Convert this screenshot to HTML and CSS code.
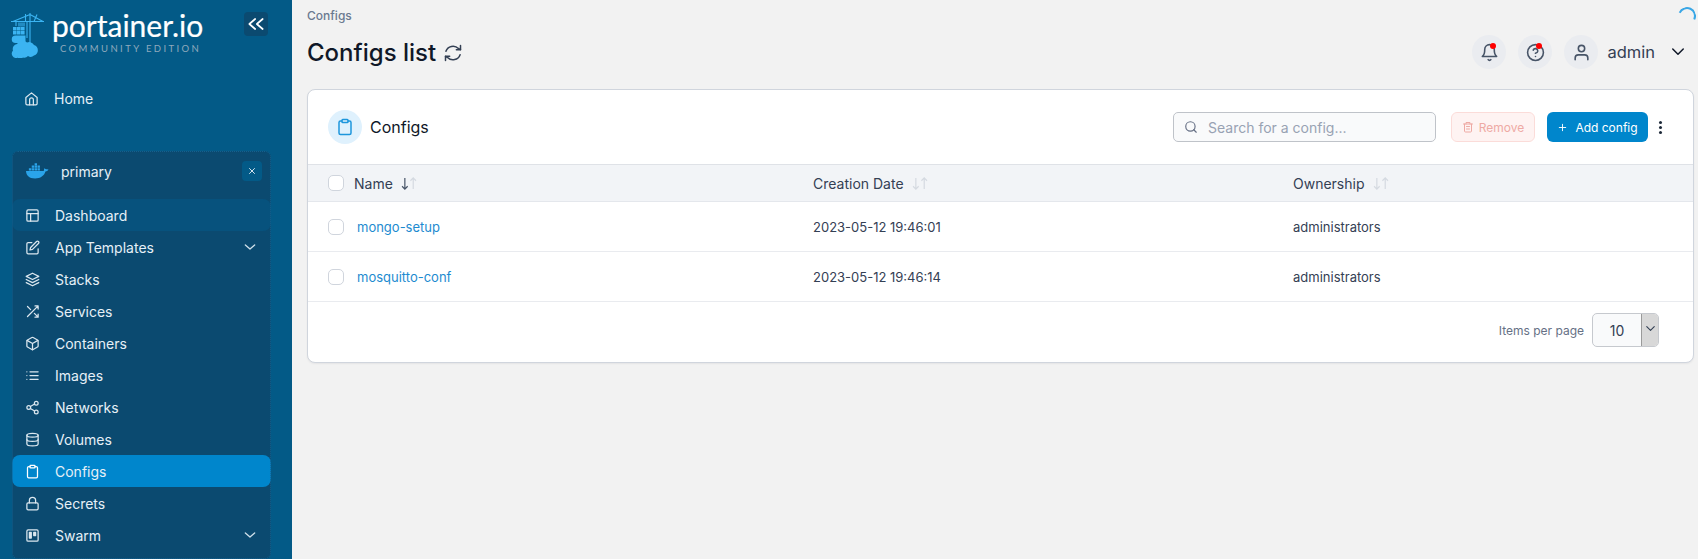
FILE: index.html
```html
<!DOCTYPE html>
<html lang="en">
<head>
<meta charset="utf-8">
<title>Configs list</title>
<link rel="stylesheet" href="styles.css">
</head>
<body>
<div class="app">
  <aside class="sidebar">
    <div class="brand">
      <svg class="logo" viewBox="0 0 34 46" fill="none">
        <path d="M0 9.500H33M19 1V38M19 2.500L2 9.500M19 2.500L32 9.500M16 9.500V26M14.500 2V9.500M23 9.500l3-7M5 9.500V14" stroke="#3bb4f2" stroke-width="1.100"/>
        <path d="M2 15h3.600v3.600H2zM6 15h3.600v3.600H6zM10 15h3.600v3.600H10zM2 19h3.600v3.600H2zM6 19h3.600v3.600H6zM10 19h3.600v3.600H10z" fill="#3bb4f2"/>
        <path d="M7 10.500h7v4H7z" fill="#3bb4f2" opacity=".55"/>
        <path d="M4.500 23.500H14.500V31H4.500a3.700 3.700 0 0 1 0-7.500z" fill="#3bb4f2"/>
        <path d="M6 46a4.500 4.500 0 0 1-4-7.500 5 5 0 0 1 4-6.500 6.500 6.500 0 0 1 10-1.500 5.500 5.500 0 0 1 7 2.500 5.500 5.500 0 0 1 0 10.500 5 5 0 0 1-6 0.500 5 5 0 0 1-5 1.500 5 5 0 0 1-6 0z" fill="#3bb4f2"/>
      </svg>
      <div class="wordmark">
        <div class="wordmark-name">portainer.io</div>
        <div class="wordmark-edition">COMMUNITY EDITION</div>
      </div>
      <button class="collapse" type="button" aria-label="Collapse">
        <svg viewBox="0 0 24 24" fill="none" stroke="currentColor" stroke-width="2" stroke-linecap="round" stroke-linejoin="round"><path d="M11 18l-7-6 7-6M20 18l-7-6 7-6"/></svg>
      </button>
    </div>
    <a class="home">
      <svg class="ico" viewBox="0 0 24 24"><path d="M3 10.500L12 3l9 7.500V20a2 2 0 0 1-2 2H5a2 2 0 0 1-2-2z"/><path d="M9 22v-8a3 3 0 0 1 6 0v8"/></svg>
      <span>Home</span>
    </a>
    <section class="env">
      <div class="env-head">
        <svg class="docker" viewBox="0 0 24 16" fill="#2aa4ea"><path d="M0 8h18.500c.6-1.800.2-3 .2-3l1 .7c.9.600 2.300.4 2.300.4l1.500.4c-.7 1.300-2 1.900-3.200 2C19 13 15 15.800 9.500 15.800 3 15.800.2 12.500 0 8z"/><path d="M3 5h2.500v2.500H3zM6 5h2.500v2.500H6zM9 5h2.500v2.500H9zM12 5h2.500v2.500H12zM6 2.300h2.500v2.300H6zM9 2.300h2.500v2.300H9zM12 2.300h2.500v2.300H12zM9-.2h2.500v2.200H9z"/></svg>
        <span class="env-name">primary</span>
        <button class="env-close" type="button" aria-label="Clear">
          <svg viewBox="0 0 24 24" fill="none" stroke="currentColor" stroke-width="2.200" stroke-linecap="round"><path d="M18 6L6 18M6 6l12 12"/></svg>
        </button>
      </div>
      <nav class="nav">
        <a class="nav-item is-hover"><svg class="ico" viewBox="0 0 24 24"><rect x="3" y="3" width="18" height="18" rx="2"/><path d="M3 9h18M9 21V9"/></svg><span>Dashboard</span></a>
        <a class="nav-item"><svg class="ico" viewBox="0 0 24 24"><path d="M11 4H5a2 2 0 0 0-2 2v14a2 2 0 0 0 2 2h14a2 2 0 0 0 2-2v-6"/><path d="M18.500 2.500a2.100 2.100 0 0 1 3 3L12 15l-4 1 1-4z"/></svg><span>App Templates</span><svg class="chev" viewBox="0 0 24 24"><path d="M5 9l7 6 7-6"/></svg></a>
        <a class="nav-item"><svg class="ico" viewBox="0 0 24 24"><path d="M12 2L2 7l10 5 10-5z"/><path d="M2 12l10 5 10-5M2 17l10 5 10-5"/></svg><span>Stacks</span></a>
        <a class="nav-item"><svg class="ico" viewBox="0 0 24 24"><path d="M16 3h5v5M4 20L21 3M21 16v5h-5M15 15l6 6M4 4l5 5"/></svg><span>Services</span></a>
        <a class="nav-item"><svg class="ico" viewBox="0 0 24 24"><path d="M21 16V8a2 2 0 0 0-1-1.700l-7-4a2 2 0 0 0-2 0l-7 4A2 2 0 0 0 3 8v8a2 2 0 0 0 1 1.700l7 4a2 2 0 0 0 2 0l7-4a2 2 0 0 0 1-1.700z"/><path d="M3.300 7L12 12l8.700-5M12 22V12"/></svg><span>Containers</span></a>
        <a class="nav-item"><svg class="ico" viewBox="0 0 24 24"><path d="M8 6h13M8 12h13M8 18h13M3 6h.01M3 12h.01M3 18h.01"/></svg><span>Images</span></a>
        <a class="nav-item"><svg class="ico" viewBox="0 0 24 24"><circle cx="18" cy="5" r="3"/><circle cx="6" cy="12" r="3"/><circle cx="18" cy="19" r="3"/><path d="M8.600 13.500l6.800 4M15.400 6.500l-6.800 4"/></svg><span>Networks</span></a>
        <a class="nav-item"><svg class="ico" viewBox="0 0 24 24"><ellipse cx="12" cy="5" rx="9" ry="3"/><path d="M21 12c0 1.700-4 3-9 3s-9-1.300-9-3"/><path d="M3 5v14c0 1.700 4 3 9 3s9-1.300 9-3V5"/></svg><span>Volumes</span></a>
        <a class="nav-item is-active"><svg class="ico" viewBox="0 0 24 24"><path d="M16 4h2a2 2 0 0 1 2 2v14a2 2 0 0 1-2 2H6a2 2 0 0 1-2-2V6a2 2 0 0 1 2-2h2"/><rect x="8" y="2" width="8" height="4" rx="1"/></svg><span>Configs</span></a>
        <a class="nav-item"><svg class="ico" viewBox="0 0 24 24"><rect x="3" y="11" width="18" height="11" rx="2"/><path d="M7 11V7a5 5 0 0 1 10 0v4"/></svg><span>Secrets</span></a>
        <a class="nav-item"><svg class="ico" viewBox="0 0 24 24"><rect x="3" y="3" width="18" height="18" rx="2"/><path d="M7 7h3v9H7zM14 7h3v5h-3z" fill="currentColor"/></svg><span>Swarm</span><svg class="chev" viewBox="0 0 24 24"><path d="M5 9l7 6 7-6"/></svg></a>
      </nav>
    </section>
  </aside>

  <main class="main">
    <div class="spinner"></div>
    <header class="topbar">
      <div class="crumbs">Configs</div>
      <div class="topbar-row">
        <h1 class="title">Configs list
          <svg class="refresh" viewBox="0 0 24 24"><path d="M21 3v5h-5M3 21v-5h5"/><path d="M3.500 10a9 9 0 0 1 15-3.400L21 8M20.500 14a9 9 0 0 1-15 3.400L3 16"/></svg>
        </h1>
        <div class="user">
          <span class="round"><svg viewBox="0 0 24 24"><path d="M18 8a6 6 0 0 0-12 0c0 7-3 9-3 9h18s-3-2-3-9"/><path d="M13.700 21a2 2 0 0 1-3.400 0"/></svg><i class="dot"></i></span>
          <span class="round"><svg viewBox="0 0 24 24"><circle cx="12" cy="12" r="10"/><path d="M9.100 9a3 3 0 0 1 5.800 1c0 2-3 3-3 3M12 17h.01"/></svg><i class="dot"></i></span>
          <span class="round"><svg viewBox="0 0 24 24"><circle cx="12" cy="7" r="4"/><path d="M20 21v-2a4 4 0 0 0-4-4H8a4 4 0 0 0-4 4v2"/></svg></span>
          <span class="user-name">admin</span>
          <svg class="user-chev" viewBox="0 0 24 24"><path d="M5 8l7 7 7-7"/></svg>
        </div>
      </div>
    </header>

    <section class="card">
      <div class="card-head">
        <span class="card-icon"><svg viewBox="0 0 24 24"><path d="M16 4h2a2 2 0 0 1 2 2v14a2 2 0 0 1-2 2H6a2 2 0 0 1-2-2V6a2 2 0 0 1 2-2h2"/><rect x="8" y="2" width="8" height="4" rx="1"/></svg></span>
        <h2 class="card-title">Configs</h2>
        <div class="search">
          <svg viewBox="0 0 24 24"><circle cx="11" cy="11" r="8"/><path d="M21 21l-4.300-4.300"/></svg>
          <span>Search for a config...</span>
        </div>
        <button class="btn btn-remove" type="button"><svg viewBox="0 0 24 24"><path d="M3 6h18M8 6V3h8v3M5 6v14a2 2 0 0 0 2 2h10a2 2 0 0 0 2-2V6M9 11h6M9 16h6"/></svg>Remove</button>
        <button class="btn btn-add" type="button"><svg viewBox="0 0 24 24"><path d="M12 5v14M5 12h14"/></svg>Add config</button>
        <span class="kebab"><i></i><i></i><i></i></span>
      </div>
      <div class="row row-head">
        <div class="cell cell-name"><span class="check"></span><span class="head-label">Name</span>
          <svg class="sort sort-desc" viewBox="0 0 18 14"><path class="arrow-a" d="M4 1v12M1 10l3 3 3-3"/><path class="arrow-b" d="M13 13V1M10 4l3-3 3 3"/></svg></div>
        <div class="cell cell-date"><span class="head-label">Creation Date</span>
          <svg class="sort" viewBox="0 0 18 14"><path class="arrow-a" d="M4 1v12M1 10l3 3 3-3"/><path class="arrow-b" d="M13 13V1M10 4l3-3 3 3"/></svg></div>
        <div class="cell cell-own"><span class="head-label">Ownership</span>
          <svg class="sort" viewBox="0 0 18 14"><path class="arrow-a" d="M4 1v12M1 10l3 3 3-3"/><path class="arrow-b" d="M13 13V1M10 4l3-3 3 3"/></svg></div>
      </div>
      <div class="row row-body">
        <div class="cell cell-name"><span class="check"></span><a class="link">mongo-setup</a></div>
        <div class="cell cell-date">2023-05-12 19:46:01</div>
        <div class="cell cell-own">administrators</div>
      </div>
      <div class="row row-body">
        <div class="cell cell-name"><span class="check"></span><a class="link">mosquitto-conf</a></div>
        <div class="cell cell-date">2023-05-12 19:46:14</div>
        <div class="cell cell-own">administrators</div>
      </div>
      <div class="card-foot">
        <span class="per-page">Items per page</span>
        <div class="select"><span class="select-value">10</span><span class="select-arrow"><svg viewBox="0 0 24 24"><path d="M6 9l6 6 6-6"/></svg></span></div>
      </div>
    </section>
  </main>
</div>
</body>
</html>
```

FILE: styles.css
```css
* { box-sizing: border-box; }
html, body { margin: 0; height: 100%; overflow: hidden; }
body { font-family: Inter, "Liberation Sans", sans-serif; background: #f2f2f2; color: #111827; }
svg { display: block; }
button { font-family: inherit; border: 0; padding: 0; }
h1, h2 { margin: 0; font-weight: 500; }
.app { display: flex; height: 559px; }

.sidebar { width: 292px; flex: none; background: #035a87; color: #e6f0f7; overflow: hidden; padding-left: 12px; }
.brand { display: flex; height: 63px; margin-left: -1px; padding-top: 9px; align-items: flex-start; }
.logo { width: 34px; height: 46px; flex: none; margin-top: 3px; }
.wordmark { width: 162px; margin: 1px 0 0 7px; }
.wordmark-name { font-family: Lato, sans-serif; font-size: 30px; line-height: 30px; color: #fff; -webkit-text-stroke: .2px #fff; }
.wordmark-edition { font-family: Lato, sans-serif; font-size: 9.500px; line-height: 11px; letter-spacing: 2.400px; color: #8fa9bc; margin: 3px 0 0 8px; white-space: nowrap; }
.collapse { width: 24px; height: 24px; margin: 3px 0 0 30px; background: #0b4a70; color: #fff; border-radius: 4px; padding: 2px; flex: none; }
.home { display: flex; align-items: center; height: 32px; margin-top: 19px; padding-left: 12px; font-size: 14px; gap: 15px; }
.ico { width: 15px; height: 15px; flex: none; fill: none; stroke: currentColor; stroke-width: 2; stroke-linecap: round; stroke-linejoin: round; color: #dbe7ef; }

.env { width: 259px; margin-top: 37px; height: 408px; background: #0b4a70; border-radius: 6px; outline: 1px dotted #14618f; outline-offset: -1px; }
.env-head { display: flex; align-items: center; height: 48px; padding: 0 9px 8px 14px; font-size: 14px; }
.docker { width: 23px; height: 16px; flex: none; }
.env-name { flex: 1; margin-left: 12px; }
.env-close { width: 20px; height: 20px; background: #035a87; color: #e6f0f7; border-radius: 4px; padding: 5px; }
.nav { display: flex; flex-direction: column; }
.nav-item { display: flex; align-items: center; height: 32px; padding: 0 13px; gap: 15px; font-size: 14px; border-radius: 8px; }
.nav-item span { flex: 1; }
.nav-item.is-hover { background: #07527d; }
.nav-item.is-active { background: #0086cc; }
.nav-item.is-active .ico { color: #fff; }
.chev { width: 16px; height: 16px; flex: none; fill: none; stroke: #cfe0eb; stroke-width: 2; stroke-linecap: round; stroke-linejoin: round; }

.main { flex: 1; min-width: 0; padding: 0 4px 0 15px; position: relative; }
.spinner { position: absolute; top: 7px; right: 2px; width: 18px; height: 18px; border-radius: 50%; border: 2px solid transparent; border-top-color: #3aa7e6; border-right-color: #3aa7e6; transform: rotate(-20deg); }
.topbar { height: 89px; }
.crumbs { font-size: 12px; font-weight: 500; color: #6b7a90; line-height: 15px; padding-top: 8px; }
.topbar-row { display: flex; align-items: center; justify-content: space-between; height: 36px; margin-top: 11px; }
.title { display: flex; align-items: center; gap: 7px; font-size: 24px; line-height: 36px; color: #101828; font-weight: 500; padding-top: 1px; }
.refresh { width: 20px; height: 20px; fill: none; stroke: #344054; stroke-width: 1.800; stroke-linecap: round; stroke-linejoin: round; }
.user { display: flex; align-items: center; gap: 12px; padding-right: 7px; }
.round { position: relative; width: 34px; height: 34px; border-radius: 50%; background: #eaecf0; display: flex; align-items: center; justify-content: center; }
.round svg { width: 19px; height: 19px; fill: none; stroke: #475467; stroke-width: 2; stroke-linecap: round; stroke-linejoin: round; }
.dot { position: absolute; top: 8px; right: 10px; width: 6px; height: 6px; border-radius: 50%; background: #f00; }
.user-name { font-size: 16.500px; color: #344054; margin-left: -3px; }
.user-chev { width: 18px; height: 18px; margin-left: 2px; fill: none; stroke: #101828; stroke-width: 2; stroke-linecap: round; stroke-linejoin: round; }

.card { background: #fff; border: 1px solid #d0d5dd; border-radius: 8px; height: 274px; box-shadow: 0 1px 2px rgba(16,24,40,.06); overflow: hidden; }
.card-head { display: flex; align-items: center; height: 74px; padding: 0 31px 0 20px; }
.card-icon { width: 34px; height: 34px; border-radius: 50%; background: #dff1fd; display: flex; align-items: center; justify-content: center; }
.card-icon svg { width: 18px; height: 18px; fill: none; stroke: #1d96dc; stroke-width: 2; stroke-linecap: round; stroke-linejoin: round; }
.card-title { font-size: 16px; margin-left: 8px; flex: 1; color: #101828; font-weight: 400; }
.search { display: flex; align-items: center; gap: 10px; width: 263px; height: 30px; border: 1px solid #bfc3c9; border-radius: 5px; background: #f9fafb; padding: 0 10px; font-size: 14px; color: #98a2b3; }
.search svg { width: 14px; height: 14px; fill: none; stroke: #667085; stroke-width: 2; stroke-linecap: round; stroke-linejoin: round; }
.btn { display: flex; align-items: center; justify-content: center; height: 30px; border-radius: 6px; font-size: 12px; font-weight: 400; }
.btn svg { fill: none; stroke: currentColor; stroke-width: 2; stroke-linecap: round; stroke-linejoin: round; }
.btn-remove { width: 84px; margin-left: 15px; gap: 5px; background: #fef3f2; border: 1px solid #fbdcd9; color: #eeaaa4; }
.btn-remove svg { width: 12px; height: 12px; }
.btn-add { width: 101px; margin-left: 12px; gap: 7px; background: #0086cc; color: #fff; }
.btn-add svg { width: 11px; height: 11px; }
.kebab { display: flex; flex-direction: column; gap: 2px; width: 3px; margin-left: 11px; }
.kebab i { width: 3px; height: 3px; border-radius: 50%; background: #1d2939; }

.row { display: flex; align-items: center; font-size: 13px; color: #344054; }
.row-head { height: 38px; background: #f2f4f7; border-top: 1px solid #dfe2e7; border-bottom: 1px solid #e4e7ec; font-size: 14px; }
.row-body { height: 50px; border-bottom: 1px solid #e9ebef; font-size: 13px; }
.cell { display: flex; align-items: center; }
.cell-name { width: 505px; padding-left: 20px; }
.cell-date { width: 480px; }
.cell-own { flex: 1; }
.check { width: 16px; height: 16px; border: 1px solid #d0d5dd; border-radius: 5px; background: #fff; flex: none; }
.row-head .check { margin-right: 10px; }
.row-body .check { margin-right: 13px; }
.head-label { color: #344054; }
.sort { width: 17px; height: 13px; margin-left: 8px; fill: none; stroke-width: 1.300; }
.sort path { stroke: #d5dae1; }
.sort-desc .arrow-a { stroke: #475467; }
.link { color: #1d8bd0; }
.card-foot { display: flex; align-items: center; justify-content: flex-end; height: 60px; padding: 0 34px 4px 0; }
.per-page { font-size: 12px; color: #667085; margin-right: 8px; }
.select { display: flex; width: 67px; height: 34px; border: 1px solid #c6c9ce; border-radius: 5px; background: #f9fafb; overflow: hidden; }
.select-value { flex: 1; display: flex; align-items: center; justify-content: center; font-size: 14px; color: #344054; }
.select-arrow { width: 17px; background: #d8d8d8; border-left: 1px solid #9a9a9a; display: flex; justify-content: center; padding-top: 7px; }
.select-arrow svg { width: 15px; height: 15px; fill: none; stroke: #344054; stroke-width: 1.800; stroke-linecap: round; stroke-linejoin: round; }
```
